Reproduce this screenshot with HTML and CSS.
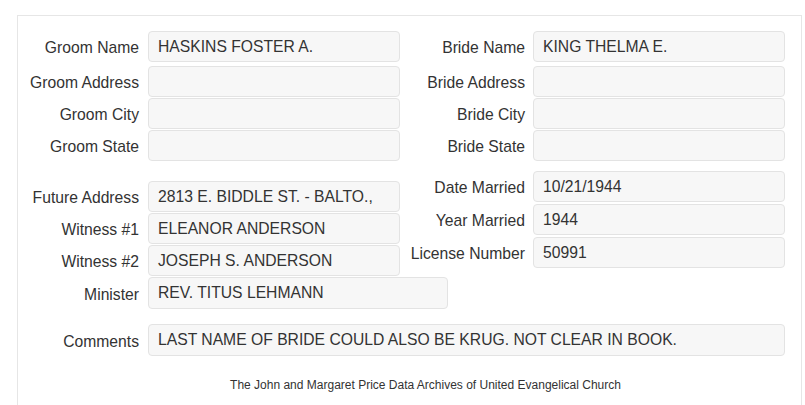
FILE: index.html
```html
<!DOCTYPE html>
<html lang="en">
<head>
    <meta charset="UTF-8">
    <title>Marriage Record</title>
    <link rel="stylesheet" href="styles.css">
</head>
<body>
    <div class="panel">
        <div class="section names">
            <div class="col left">
                <div class="row first"><label>Groom Name</label><div class="field">HASKINS FOSTER A.</div></div>
                <div class="row"><label>Groom Address</label><div class="field"></div></div>
                <div class="row"><label>Groom City</label><div class="field"></div></div>
                <div class="row"><label>Groom State</label><div class="field"></div></div>
            </div>
            <div class="col right">
                <div class="row first"><label>Bride Name</label><div class="field">KING THELMA E.</div></div>
                <div class="row"><label>Bride Address</label><div class="field"></div></div>
                <div class="row"><label>Bride City</label><div class="field"></div></div>
                <div class="row"><label>Bride State</label><div class="field"></div></div>
            </div>
        </div>

        <div class="section details">
            <div class="col left">
                <div class="row"><label>Future Address</label><div class="field">2813 E. BIDDLE ST. - BALTO.,</div></div>
                <div class="row"><label>Witness #1</label><div class="field">ELEANOR ANDERSON</div></div>
                <div class="row"><label>Witness #2</label><div class="field">JOSEPH S. ANDERSON</div></div>
                <div class="row"><label>Minister</label><div class="field wide">REV. TITUS LEHMANN</div></div>
            </div>
            <div class="col right">
                <div class="row"><label>Date Married</label><div class="field">10/21/1944</div></div>
                <div class="row"><label>Year Married</label><div class="field">1944</div></div>
                <div class="row"><label>License Number</label><div class="field">50991</div></div>
            </div>
        </div>

        <div class="row comments">
            <label>Comments</label>
            <div class="field full">LAST NAME OF BRIDE COULD ALSO BE KRUG. NOT CLEAR IN BOOK.</div>
        </div>

        <div class="footer">
            The John and Margaret Price Data Archives of United Evangelical Church
        </div>
    </div>
</body>
</html>
```

FILE: styles.css
```css
body {
    margin: 0;
    font-family: "Liberation Sans", Arial, sans-serif;
    font-size: 15.7px;
    color: #333;
    background: #fff;
}
.panel {
    margin: 15px 0 0 17px;
    width: 785px;
    height: 400px;
    border: 1px solid #e6e6e6;
    border-bottom: none;
    padding-top: 15px;
    box-sizing: border-box;
}
.section {
    display: flex;
}
.col {
    display: flex;
    flex-direction: column;
}
.col.left {
    width: 382px;
}
.col.right {
    width: 385px;
}
.row {
    display: flex;
    align-items: center;
    margin-bottom: 1px;
}
.row label {
    flex-shrink: 0;
    box-sizing: border-box;
    text-align: right;
    padding-top: 3px;
    white-space: nowrap;
}
.left label,
.comments label {
    width: 130px;
    padding-right: 9px;
}
.right label {
    width: 133px;
    padding-right: 8px;
}
.field {
    flex-shrink: 0;
    box-sizing: border-box;
    width: 252px;
    height: 31px;
    line-height: 29px;
    padding: 0 9px;
    background: #f7f7f7;
    border: 1px solid #e3e3e3;
    border-radius: 4px;
    white-space: nowrap;
}
.names .row.first {
    margin-bottom: 4px;
}
.details {
    margin-top: 9px;
}
.details .col.left {
    padding-top: 10px;
}
.details .col.left .field.wide {
    width: 300px;
    height: 32px;
}
.details .col.right .row {
    margin-bottom: 2px;
}
.comments {
    margin-top: 14px;
}
.field.full {
    width: 637px;
    height: 32px;
}
.footer {
    margin-top: 22px;
    text-align: center;
    font-size: 12px;
    padding-left: 32px;
}
```
